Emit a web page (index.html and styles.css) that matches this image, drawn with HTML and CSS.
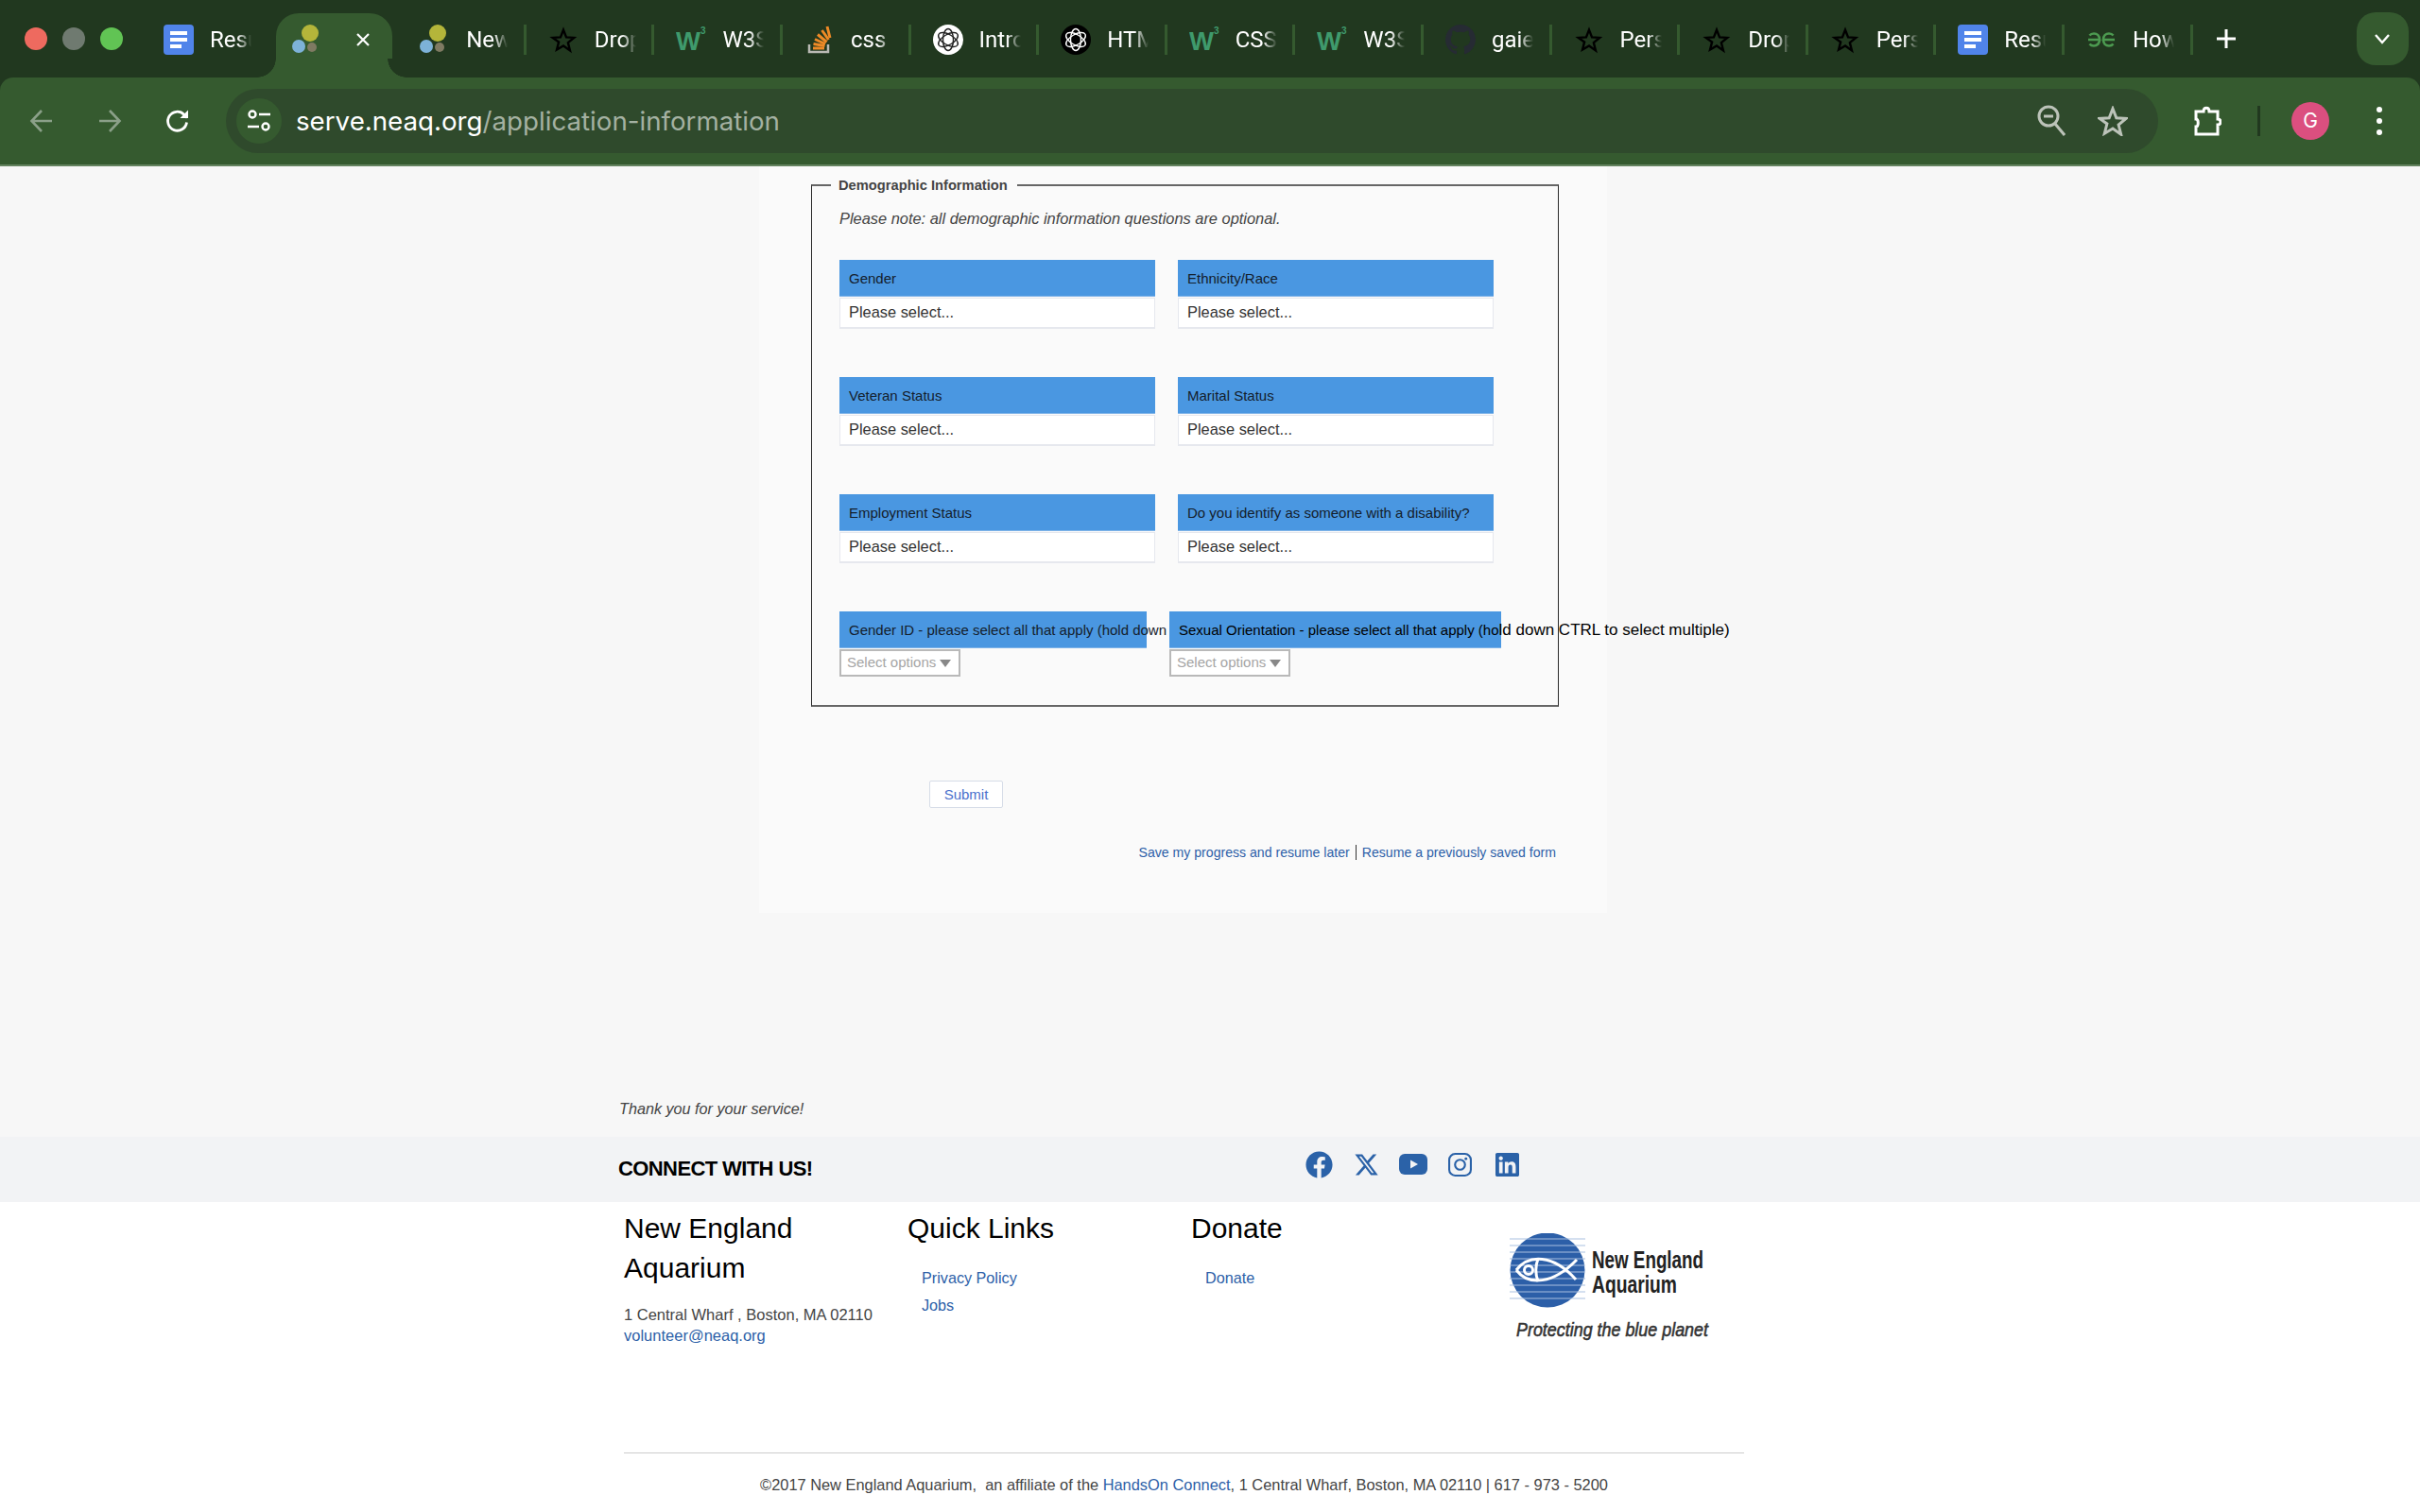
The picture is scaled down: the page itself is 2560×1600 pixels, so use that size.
FILE: index.html
```html
<!DOCTYPE html>
<html lang="en">
<head>
    <meta charset="UTF-8">
    <title>Application Information</title>
    <link rel="stylesheet" href="styles.css">
</head>
<body>
    <svg class="defs" width="0" height="0">
        <symbol id="i-docs" viewBox="0 0 32 32">
            <rect width="32" height="32" rx="4" fill="#5084ea"/>
            <rect x="7" y="7" width="18" height="4" fill="#fff"/>
            <rect x="7" y="14" width="18" height="4" fill="#fff"/>
            <rect x="7" y="21" width="12" height="4" fill="#fff"/>
        </symbol>
        <symbol id="i-dots" viewBox="0 0 32 32">
            <circle cx="19" cy="9" r="9" fill="#b4b53a"/>
            <circle cx="7" cy="23" r="7" fill="#7db2d8"/>
            <circle cx="21" cy="24" r="5" fill="#7f7a62"/>
        </symbol>
        <symbol id="i-star" viewBox="-4 -4 40 40">
            <path d="M16 3l3.800 9.800 10.200.6-7.900 6.600 2.600 10.200L16 24l-8.700 5.200 2.600-10.200L2 13.400l10.200-.6z" fill="none" stroke="#000" stroke-width="3"/>
        </symbol>
        <symbol id="i-w3" viewBox="0 0 32 32">
            <text x="0" y="27" class="w3-w" textLength="26" lengthAdjust="spacingAndGlyphs">W</text>
            <text x="26" y="10" class="w3-3">3</text>
        </symbol>
        <symbol id="i-so" viewBox="0 0 32 32">
            <path d="M5 21v8h20v-8" fill="none" stroke="#b9b9b3" stroke-width="2.500"/>
            <g stroke="#ee8a26" stroke-width="3">
                <path d="M9 25h12"/><path d="M9.500 20.500l12 2"/><path d="M11 15.500l11 5"/><path d="M14 10.500l9.500 8"/><path d="M18.500 6l7 10"/><path d="M24 2l3 12"/>
            </g>
        </symbol>
        <symbol id="i-gpt" viewBox="0 0 32 32">
            <g fill="none" stroke="currentColor" stroke-width="1.400">
                <ellipse cx="16" cy="16" rx="5.500" ry="11.500"/>
                <ellipse cx="16" cy="16" rx="5.500" ry="11.500" transform="rotate(60 16 16)"/>
                <ellipse cx="16" cy="16" rx="5.500" ry="11.500" transform="rotate(120 16 16)"/>
            </g>
        </symbol>
        <symbol id="i-gh" viewBox="0 0 16 16">
            <path fill="#262b33" d="M8 0C3.580 0 0 3.580 0 8c0 3.540 2.290 6.530 5.470 7.590.4.070.55-.17.55-.38 0-.19-.01-.82-.01-1.490-2.010.37-2.530-.49-2.690-.94-.09-.23-.48-.94-.82-1.130-.28-.15-.68-.52-.01-.53.63-.01 1.080.58 1.230.82.72 1.210 1.870.87 2.330.66.07-.52.28-.87.51-1.070-1.780-.2-3.640-.89-3.640-3.950 0-.87.31-1.590.82-2.150-.08-.2-.36-1.020.08-2.120 0 0 .67-.21 2.200.82.64-.18 1.320-.27 2-.27.68 0 1.360.09 2 .27 1.530-1.040 2.200-.82 2.200-.82.44 1.100.16 1.920.08 2.120.51.56.82 1.270.82 2.150 0 3.070-1.870 3.750-3.650 3.950.29.25.54.73.54 1.480 0 1.070-.01 1.930-.01 2.200 0 .21.15.46.55.38A8.013 8.013 0 0016 8c0-4.420-3.580-8-8-8z"/>
        </symbol>
        <symbol id="i-gfg" viewBox="0 0 32 32">
            <g fill="none" stroke="#4c9a50" stroke-width="2.600">
                <path d="M2 16h12c0-4-2.500-6.500-6-6.500-2 0-3.500.7-4.500 2"/>
                <path d="M3.500 20.500c1 1.300 2.500 2 4.500 2 3.500 0 6-2.500 6-6.500"/>
                <path d="M30 16H18c0-4 2.500-6.500 6-6.500 2 0 3.500.7 4.500 2"/>
                <path d="M28.500 20.500c-1 1.300-2.500 2-4.500 2-3.500 0-6-2.500-6-6.500"/>
            </g>
        </symbol>
    </svg>

    <div class="chrome">
        <div class="tabstrip">
            <div class="lights">
                <span class="light red"></span>
                <span class="light gray"></span>
                <span class="light green"></span>
            </div>
            <div class="tabs">
                <div class="tab"><svg class="favicon"><use href="#i-docs"/></svg><span class="tabtitle">Resume</span></div>
                <div class="tab active">
                    <svg class="favicon"><use href="#i-dots"/></svg>
                    <svg class="tabclose" viewBox="0 0 16 16"><path d="M2 2l12 12M14 2L2 14" stroke="#fff" stroke-width="2.200"/></svg>
                </div>
                <div class="tab"><svg class="favicon"><use href="#i-dots"/></svg><span class="tabtitle">New England</span></div>
                <div class="tab"><svg class="favicon"><use href="#i-star"/></svg><span class="tabtitle">Dropdown</span></div>
                <div class="tab"><svg class="favicon"><use href="#i-w3"/></svg><span class="tabtitle">W3Schools</span></div>
                <div class="tab"><svg class="favicon"><use href="#i-so"/></svg><span class="tabtitle">css</span></div>
                <div class="tab"><span class="favicon gpt light-gpt"><svg><use href="#i-gpt"/></svg></span><span class="tabtitle">Introduction</span></div>
                <div class="tab"><span class="favicon gpt dark-gpt"><svg><use href="#i-gpt"/></svg></span><span class="tabtitle">HTML</span></div>
                <div class="tab"><svg class="favicon"><use href="#i-w3"/></svg><span class="tabtitle">CSS</span></div>
                <div class="tab"><svg class="favicon"><use href="#i-w3"/></svg><span class="tabtitle">W3Schools</span></div>
                <div class="tab"><svg class="favicon"><use href="#i-gh"/></svg><span class="tabtitle">gaiety</span></div>
                <div class="tab"><svg class="favicon"><use href="#i-star"/></svg><span class="tabtitle">Personal</span></div>
                <div class="tab"><svg class="favicon"><use href="#i-star"/></svg><span class="tabtitle">Dropdown</span></div>
                <div class="tab"><svg class="favicon"><use href="#i-star"/></svg><span class="tabtitle">Personal</span></div>
                <div class="tab"><svg class="favicon"><use href="#i-docs"/></svg><span class="tabtitle">Resume</span></div>
                <div class="tab"><svg class="favicon"><use href="#i-gfg"/></svg><span class="tabtitle">How to</span></div>
            </div>
            <svg class="newtab" viewBox="0 0 22 22"><path d="M11 1v20M1 11h20" stroke="#fff" stroke-width="3"/></svg>
            <div class="tabmenu">
                <svg viewBox="0 0 18 12" width="18" height="12"><path d="M2 2l7 8 7-8" fill="none" stroke="#fff" stroke-width="2.400"/></svg>
            </div>
        </div>

        <div class="toolbar">
            <svg class="navicon" viewBox="0 0 28 28"><path d="M25 14H4M14 3L3.500 14 14 25" fill="none" stroke="#8ba089" stroke-width="2.600"/></svg>
            <svg class="navicon" viewBox="0 0 28 28"><path d="M3 14h21M14 3l10.500 11L14 25" fill="none" stroke="#8ba089" stroke-width="2.600"/></svg>
            <svg class="navicon" viewBox="0 0 28 28"><path d="M23.500 15.500a10 10 0 1 1-2.800-8.300L24 10.500" fill="none" stroke="#fff" stroke-width="2.800"/><path d="M25 2.500V11h-8.500z" fill="#fff"/></svg>
            <div class="omnibox">
                <span class="siteicon">
                    <svg viewBox="0 0 28 28" width="28" height="28"><g fill="none" stroke="#fff" stroke-width="2.400"><circle cx="7" cy="7" r="3.500"/><path d="M14 7h12M2 20h12"/><circle cx="21" cy="20" r="3.500"/></g></svg>
                </span>
                <span class="url">serve.neaq.org<span class="urlpath">/application-information</span></span>
                <svg class="zoomicon" viewBox="0 0 30 34"><g fill="none" stroke="#bcc3b9" stroke-width="3"><circle cx="12" cy="12" r="10"/><path d="M19 20l10 12"/><path d="M7 12h10"/></g></svg>
                <svg class="staricon" viewBox="0 0 32 32"><path d="M16 3l3.800 9.800 10.200.6-7.900 6.600 2.600 10.200L16 24l-8.700 5.200 2.600-10.200L2 13.400l10.200-.6z" fill="none" stroke="#bcc3b9" stroke-width="3"/></svg>
            </div>
            <svg class="puzzle" viewBox="0 0 30 36"><path d="M3 8h8c0-5 6-5 6 0h9v8c4 0 4 6 0 6v10H3V24c3 0 3-8 0-8z" fill="none" stroke="#fff" stroke-width="3"/></svg>
            <span class="tooldivider"></span>
            <span class="avatar">G</span>
            <span class="kebab"><i></i><i></i><i></i></span>
        </div>
    </div>

    <main class="panel">
        <fieldset class="demographics">
            <legend>Demographic Information</legend>
            <p class="note">Please note: all demographic information questions are optional.</p>
            <div class="fields">
                <div class="field">
                    <div class="fieldlabel">Gender</div>
                    <div class="fieldselect">Please select...</div>
                </div>
                <div class="field">
                    <div class="fieldlabel">Ethnicity/Race</div>
                    <div class="fieldselect">Please select...</div>
                </div>
                <div class="field">
                    <div class="fieldlabel">Veteran Status</div>
                    <div class="fieldselect">Please select...</div>
                </div>
                <div class="field">
                    <div class="fieldlabel">Marital Status</div>
                    <div class="fieldselect">Please select...</div>
                </div>
                <div class="field">
                    <div class="fieldlabel">Employment Status</div>
                    <div class="fieldselect">Please select...</div>
                </div>
                <div class="field">
                    <div class="fieldlabel">Do you identify as someone with a disability?</div>
                    <div class="fieldselect">Please select...</div>
                </div>
            </div>
            <div class="multifields">
                <div class="multi clipped">
                    <div class="fieldlabel gender-id">Gender ID - please select all that apply (hold down CTRL to select multiple)</div>
                    <div class="multiselect">Select options <span class="caret"></span></div>
                </div>
                <div class="multi">
                    <div class="fieldlabel orientation">Sexual Orientation - please select all that apply (ho<span class="overrun">ld down CTRL to select multiple)</span></div>
                    <div class="multiselect">Select options <span class="caret"></span></div>
                </div>
            </div>
        </fieldset>
        <button class="submit">Submit</button>
        <div class="savelinks">
            <a href="#">Save my progress and resume later</a><span class="pipe"></span><a href="#">Resume a previously saved form</a>
        </div>
    </main>

    <p class="thanks">Thank you for your service!</p>

    <div class="connect">
        <h2>CONNECT WITH US!</h2>
        <div class="social">
            <svg class="s-fb" viewBox="0 0 512 512"><path d="M504 256C504 119 393 8 256 8S8 119 8 256c0 123.780 90.690 226.380 209.250 245V327.690h-63V256h63v-54.640c0-62.150 37-96.480 93.670-96.480 27.140 0 55.520 4.840 55.520 4.840v61h-31.280c-30.800 0-40.410 19.120-40.410 38.730V256h68.780l-11 71.690h-57.780V501C413.310 482.380 504 379.780 504 256z"/></svg>
            <svg class="s-x" viewBox="0 0 512 512"><path d="M389.200 48h70.600L305.600 224.200 487 464H345L233.700 318.600 106.500 464H35.800L200.700 275.500 26.800 48H172.400L272.900 180.900 389.200 48zM364.400 421.800h39.100L151.100 88h-42L364.400 421.800z"/></svg>
            <svg class="s-yt" viewBox="0 0 30 22"><rect width="30" height="22" rx="6"/><path d="M12 6.500v9l8-4.500z" fill="#f2f3f5"/></svg>
            <svg class="s-ig" viewBox="0 0 26 26"><g fill="none" stroke="#2b62a8" stroke-width="2.200"><rect x="1.100" y="1.100" width="23.800" height="23.800" rx="6.500"/><circle cx="13" cy="13" r="5.500"/></g><circle cx="19.500" cy="6.500" r="1.500"/></svg>
            <svg class="s-li" viewBox="0 32 448 448"><path d="M416 32H31.900C14.300 32 0 46.500 0 64.300v383.400C0 465.500 14.300 480 31.900 480H416c17.600 0 32-14.500 32-32.300V64.300c0-17.800-14.400-32.300-32-32.300zM135.400 416H69V202.200h66.500V416zm-33.200-243c-21.300 0-38.500-17.300-38.500-38.500S80.900 96 102.200 96c21.200 0 38.500 17.300 38.500 38.500 0 21.300-17.200 38.500-38.500 38.500zm282.100 243h-66.400V312c0-24.800-.5-56.700-34.500-56.700-34.600 0-39.900 27-39.900 54.900V416h-66.400V202.200h63.700v29.200h.9c8.900-16.800 30.600-34.500 62.900-34.500 67.200 0 79.700 44.300 79.700 101.900V416z"/></svg>
        </div>
    </div>

    <footer class="footer">
        <div class="footcols">
            <div class="footcol">
                <h3>New England<br>Aquarium</h3>
                <p class="address">1 Central Wharf , Boston, MA 02110<br><a href="#">volunteer@neaq.org</a></p>
            </div>
            <div class="footcol">
                <h3>Quick Links</h3>
                <ul class="footlinks">
                    <li><a href="#">Privacy Policy</a></li>
                    <li><a href="#">Jobs</a></li>
                </ul>
            </div>
            <div class="footcol">
                <h3>Donate</h3>
                <ul class="footlinks">
                    <li><a href="#">Donate</a></li>
                </ul>
            </div>
            <svg class="logo" viewBox="0 0 220 120" width="220" height="120">
                <circle cx="40" cy="39" r="39.500" fill="#2c5fa8"/>
                <g stroke="#a9c0e0" stroke-width="1">
                    <path d="M0 6h80M0 13h80M0 20h80M0 27h80M0 34h80M0 41h80M0 48h80M0 55h80M0 62h80M0 69h80"/>
                </g>
                <g fill="none" stroke="#fff" stroke-width="3">
                    <path d="M7 39C20 22 46 22 70 49"/>
                    <path d="M7 39C20 56 46 54 71 28"/>
                    <path d="M30 27c-3 8-3 16 0 24"/>
                    <circle cx="20" cy="39" r="4.500"/>
                </g>
                <text x="87" y="37" class="logo-name" textLength="118" lengthAdjust="spacingAndGlyphs">New England</text>
                <text x="87" y="63" class="logo-name" textLength="90" lengthAdjust="spacingAndGlyphs">Aquarium</text>
                <text x="7" y="109" class="logo-tag" textLength="203" lengthAdjust="spacingAndGlyphs">Protecting the blue planet</text>
            </svg>
        </div>
        <div class="footrule"></div>
        <p class="copyright">©2017 New England Aquarium, &nbsp;an affiliate of the <a href="#">HandsOn Connect</a>, 1 Central Wharf, Boston, MA 02110 | 617 - 973 - 5200</p>
    </footer>
</body>
</html>
```

FILE: styles.css
```css
body {
    margin: 0;
    width: 2560px;
    height: 1600px;
    overflow: hidden;
    background-color: #f7f7f7;
    font-family: "Liberation Sans", Arial, sans-serif;
    font-size: 15px;
    color: #333;
}

a {
    color: #2d5fa8;
    text-decoration: none;
}

.defs {
    position: absolute;
}

.w3-w {
    font: bold 28px "Liberation Sans", sans-serif;
    fill: #3f9a6c;
}

.w3-3 {
    font: bold 10px "Liberation Sans", sans-serif;
    fill: #3f9a6c;
}

/* browser chrome */
.chrome {
    background-color: #21381f;
}

.tabstrip {
    height: 82px;
    display: flex;
    align-items: center;
}

.lights {
    width: 150px;
    box-sizing: border-box;
    padding-left: 26px;
    display: flex;
    gap: 16px;
}

.light {
    width: 24px;
    height: 24px;
    border-radius: 50%;
}

.red { background-color: #ee6a5f; }
.gray { background-color: #6f7a70; }
.green { background-color: #61c454; }

.tabs {
    display: flex;
    align-self: stretch;
}

.tab {
    width: 135.600px;
    box-sizing: border-box;
    height: 32px;
    margin-top: 26px;
    padding-left: 23px;
    display: flex;
    align-items: center;
    border-right: 3px solid #355a2f;
    position: relative;
}

.tab:first-child,
.tab.active {
    border-right-color: transparent;
}

.tab.active::before {
    content: "";
    position: absolute;
    left: 6px;
    right: 3px;
    top: -12px;
    height: 68px;
    background-color: #355a2f;
    border-radius: 24px 24px 0 0;
}

.tab.active::after {
    content: "";
    position: absolute;
    left: -14px;
    right: -12px;
    top: 36px;
    height: 20px;
    background:
        radial-gradient(circle at 0 0, #21381f 19.500px, transparent 20px) left top / 20px 20px no-repeat,
        radial-gradient(circle at 100% 0, #21381f 19.500px, transparent 20px) right top / 20px 20px no-repeat,
        linear-gradient(#355a2f, #355a2f);
    z-index: 0;
}

.tab.active .favicon,
.tab.active .tabclose {
    position: relative;
    z-index: 1;
}

.favicon {
    width: 32px;
    height: 32px;
    flex: none;
    display: block;
}

.gpt {
    border-radius: 50%;
}

.gpt svg {
    width: 32px;
    height: 32px;
    display: block;
}

.light-gpt {
    background-color: #fff;
    color: #222;
}

.dark-gpt {
    background-color: #000;
    color: #fff;
}

.tabtitle {
    width: 44px;
    margin-left: 17px;
    overflow: hidden;
    white-space: nowrap;
    font-family: Roboto, sans-serif;
    font-size: 24px;
    color: #fff;
    -webkit-mask-image: linear-gradient(to right, #000 66%, transparent 100%);
    mask-image: linear-gradient(to right, #000 66%, transparent 100%);
}

.tabclose {
    width: 16px;
    height: 16px;
    margin-left: 35px;
}

.newtab {
    width: 22px;
    height: 22px;
    margin-left: 24px;
}

.tabmenu {
    width: 55px;
    height: 56px;
    margin-left: 127px;
    background-color: #355a2f;
    border-radius: 20px;
    display: flex;
    align-items: center;
    justify-content: center;
}

.toolbar {
    height: 92px;
    background-color: #355a2f;
    border-bottom: 2px solid #64835f;
    border-radius: 14px 14px 0 0;
    display: flex;
    align-items: center;
    padding-left: 30px;
}

.navicon {
    width: 28px;
    height: 28px;
    margin-right: 44px;
}

.navicon:nth-child(3) {
    margin-right: 37px;
}

.omnibox {
    width: 2044px;
    height: 68px;
    background-color: #2f4a2c;
    border-radius: 34px;
    display: flex;
    align-items: center;
    padding-left: 11px;
    box-sizing: border-box;
}

.siteicon {
    width: 48px;
    height: 48px;
    border-radius: 50%;
    background-color: #355a2f;
    display: flex;
    align-items: center;
    justify-content: center;
}

.url {
    margin-left: 15px;
    flex: 1;
    font-family: Inter, sans-serif;
    font-size: 27.700px;
    color: #fff;
}

.urlpath {
    color: #a4b1a2;
}

.zoomicon {
    width: 30px;
    height: 34px;
}

.staricon {
    width: 32px;
    height: 32px;
    margin: 0 32px 0 34px;
}

.puzzle {
    width: 30px;
    height: 36px;
    margin-left: 37px;
}

.tooldivider {
    width: 3px;
    height: 32px;
    margin-left: 38px;
    background-color: #21381f;
}

.avatar {
    width: 40px;
    height: 40px;
    margin-left: 33px;
    border-radius: 50%;
    background-color: #db4f7f;
    color: #fff;
    font-family: Inter, sans-serif;
    font-size: 21px;
    line-height: 40px;
    text-align: center;
}

.kebab {
    margin-left: 50px;
    display: flex;
    flex-direction: column;
    gap: 6px;
}

.kebab i {
    width: 6px;
    height: 6px;
    border-radius: 50%;
    background-color: #fff;
}

/* form panel */
.panel {
    width: 897px;
    height: 790px;
    margin-left: 803px;
    background-color: #fafafa;
    box-sizing: border-box;
    padding: 10px 0 0 55px;
}

.demographics {
    width: 791px;
    height: 562px;
    box-sizing: border-box;
    margin: 0;
    padding: 0 0 0 29px;
    border: 1px solid #2b2b2b;
    border-top: 2px solid #666;
    border-bottom: 2px solid #666;
}

.demographics legend {
    margin-left: -9px;
    padding: 0 10px 0 8px;
    font-size: 14.700px;
    font-weight: bold;
    line-height: 20px;
    color: #444;
}

.note {
    margin: 15px 0 0;
    line-height: 20px;
    font-style: italic;
    color: #444;
    font-size: 16.400px;
}

.fields {
    margin-top: 34px;
    display: grid;
    grid-template-columns: 334px 334px;
    column-gap: 24px;
    row-gap: 51px;
}

.fieldlabel {
    height: 39px;
    box-sizing: border-box;
    padding-left: 10px;
    line-height: 40px;
    background-color: #4a97e1;
    border-bottom: 1px solid #7fb3e8;
    color: #14202c;
    white-space: nowrap;
}

.fieldselect {
    height: 33px;
    box-sizing: border-box;
    margin-top: 1px;
    padding-left: 9px;
    line-height: 28px;
    background-color: #fff;
    border: 1px solid #e6e8ee;
    border-bottom-width: 2px;
    color: #333;
    font-size: 16.400px;
}

.multifields {
    margin-top: 51px;
    display: flex;
}

.multi {
    width: 351px;
}

.multi.clipped {
    width: 349px;
    overflow: hidden;
}

.gender-id {
    width: 325px;
    color: #14202c;
}

.orientation {
    width: 351px;
    color: #000;
}

.overrun {
    font-size: 17px;
}

.multiselect {
    width: 128px;
    height: 29px;
    box-sizing: border-box;
    margin-top: 1px;
    padding-left: 6px;
    line-height: 23px;
    background-color: #fff;
    border: 2px solid #b9b9b9;
    color: #a5a5a5;
    font-size: 15px;
    white-space: nowrap;
}

.caret {
    display: inline-block;
    border-left: 6.500px solid transparent;
    border-right: 6.500px solid transparent;
    border-top: 8px solid #888;
}

.submit {
    display: block;
    width: 78px;
    height: 29px;
    margin: 78px 0 0 125px;
    padding: 0;
    background-color: #fff;
    border: 1px solid #d7dde8;
    border-radius: 2px;
    color: #4a70cc;
    font-family: inherit;
    font-size: 15px;
}

.savelinks {
    margin: 37px 54px 0 0;
    display: flex;
    justify-content: flex-end;
    align-items: center;
    line-height: 20px;
    font-size: 14.100px;
}

.pipe {
    width: 1px;
    height: 16px;
    margin: 0 6px;
    background-color: #333;
}

.thanks {
    margin: 0 0 0 655px;
    padding-top: 197px;
    height: 40px;
    line-height: 20px;
    font-style: italic;
    color: #444;
    font-size: 16.200px;
}

/* footer */
.connect {
    height: 69px;
    background-color: #f2f3f5;
    display: flex;
    padding-left: 654px;
}

.connect h2 {
    width: 726.500px;
    margin: 21px 0 0;
    font-size: 22px;
    line-height: 26px;
    letter-spacing: -0.6px;
    color: #000;
}

.social {
    height: 58px;
    display: flex;
    align-items: center;
}

.social svg {
    fill: #2b62a8;
    display: block;
}

.s-fb { width: 29px; height: 29px; }
.s-x { width: 27px; height: 27px; margin-left: 22px; }
.s-yt { width: 30px; height: 22px; margin-left: 21px; }
.s-ig { width: 25px; height: 25px; margin-left: 22px; }
.s-li { width: 25px; height: 25px; margin-left: 25px; }

.footer {
    height: 328px;
    background-color: #fff;
    padding: 7px 0 0 660px;
    box-sizing: border-box;
}

.footcols {
    height: 258px;
    display: flex;
}

.footcol {
    width: 300px;
}

.footcol h3 {
    margin: 0;
    font-size: 30px;
    font-weight: normal;
    line-height: 42px;
    color: #000;
}

.address {
    margin: 17px 0 0;
    font-size: 16.500px;
    line-height: 22px;
    color: #444;
}

.footlinks {
    list-style: none;
    margin: 17px 0 0;
    padding: 0 0 0 15px;
    line-height: 29px;
    font-size: 16.200px;
}

.logo {
    margin: 26px 0 0 37px;
}

.logo-name {
    font: bold 25px "Liberation Sans", sans-serif;
    fill: #222;
}

.logo-tag {
    font: italic 21px "Liberation Sans", sans-serif;
    fill: #333;
    stroke: #333;
    stroke-width: 0.6px;
}

.footrule {
    width: 1185px;
    height: 1px;
    background-color: #ccc;
}

.copyright {
    width: 1185px;
    margin: 23px 0 0;
    text-align: center;
    line-height: 20px;
    font-size: 16.400px;
    color: #444;
}
```
